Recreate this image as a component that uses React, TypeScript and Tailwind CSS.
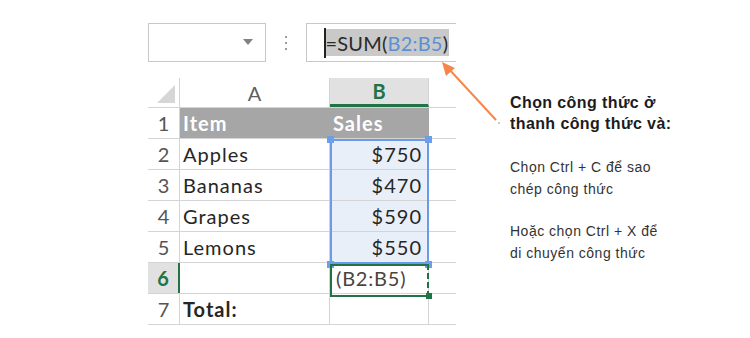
import React from "react";

const rows = [
  { n: "1", a: "Item", b: "Sales", head: true },
  { n: "2", a: "Apples", b: "$750", sel: true },
  { n: "3", a: "Bananas", b: "$470", sel: true },
  { n: "4", a: "Grapes", b: "$590", sel: true },
  { n: "5", a: "Lemons", b: "$550", sel: true },
  { n: "6", a: "", b: "(B2:B5)", active: true },
  { n: "7", a: "Total:", b: "", bold: true },
];

const cellFont = { fontFamily: "Lato, 'Open Sans', sans-serif" };

function FormulaBar() {
  return (
    <div className="flex h-[39px] pl-[148px]">
      <div className="relative h-full w-[118px] border border-[#c8c8c8] bg-white">
        <div className="absolute right-[12px] top-[15px] h-0 w-0 border-x-[5px] border-t-[6px] border-x-transparent border-t-[#808080]" />
      </div>
      <div className="flex w-[40px] flex-col items-center justify-center gap-[4px]">
        <span className="h-[2px] w-[2px] bg-[#9a9a9a]" />
        <span className="h-[2px] w-[2px] bg-[#9a9a9a]" />
        <span className="h-[2px] w-[2px] bg-[#9a9a9a]" />
      </div>
      <div className="flex h-full w-[150px] items-center border-y border-l border-[#c8c8c8] pl-[17px]">
        <div className="h-[30px] w-[1.5px] bg-[#222]" />
        <div
          className="flex h-[27px] items-center bg-[#c9c9c9] pr-[1px] text-[20px] tracking-[0.2px] text-[#2a2a2a]"
          style={cellFont}
        >
          =SUM(<span className="text-[#5a8fd4]">B2:B5</span>)
        </div>
      </div>
    </div>
  );
}

function Grid() {
  return (
    <div className="relative w-[308px]" style={cellFont}>
      {/* header row */}
      <div className="flex h-[30px] border-b border-[#d4d4d4]">
        <div className="relative w-[32px] border-r border-[#d4d4d4]">
          <svg className="absolute left-[9px] top-[7px]" width="18" height="18" viewBox="0 0 18 18">
            <polygon points="18,0 18,18 0,18" fill="#d6d6d6" />
          </svg>
        </div>
        <div className="flex w-[150px] items-center justify-center border-r border-[#d4d4d4] text-[20px] text-[#606060]">
          A
        </div>
        <div className="flex w-[99px] items-center justify-center border-b-[3px] border-r border-b-[#217346] border-r-[#d4d4d4] bg-[#e1e1e1] text-[20px] font-bold text-[#217346]">
          B
        </div>
        <div className="w-[27px]" />
      </div>
      {rows.map((r) => (
        <div key={r.n} className="flex h-[31px] border-b border-[#d4d4d4]">
          <div
            className={
              r.active
                ? "flex w-[32px] items-center justify-center border-r-2 border-[#217346] bg-[#e1e1e1] text-[20px] font-bold text-[#217346]"
                : "flex w-[32px] items-center justify-center border-r border-[#d4d4d4] text-[20px] text-[#555]"
            }
          >
            {r.n}
          </div>
          <div
            className={
              r.head
                ? "flex w-[150px] items-center bg-[#a6a6a6] pl-[3px] text-[20px] font-bold tracking-[1px] text-white"
                : "flex w-[150px] items-center border-r border-[#d4d4d4] pl-[3px] text-[20px] tracking-[1px] text-[#262626] " +
                  (r.bold ? "font-bold" : "")
            }
          >
            {r.a}
          </div>
          <div
            className={
              r.head
                ? "flex w-[99px] items-center bg-[#a6a6a6] pl-[3px] text-[20px] font-bold tracking-[1px] text-white"
                : r.active
                ? "flex w-[99px] items-center border-r border-[#d4d4d4] pl-[6px] text-[20px] tracking-[0.8px] text-[#4a4440]"
                : r.sel
                ? "flex w-[99px] items-center justify-end border-r border-[#d4d4d4] bg-[#e9eff9] pr-[6px] text-[20px] tracking-[1px] text-[#262626]"
                : "flex w-[99px] items-center justify-end border-r border-[#d4d4d4] pr-[6px] text-[20px] tracking-[1px] text-[#262626]"
            }
          >
            {r.b}
          </div>
          <div className="w-[27px]" />
        </div>
      ))}

      {/* selection B2:B5 */}
      <div className="pointer-events-none absolute left-[182px] top-[61px] h-[125px] w-[99px] border-2 border-[#6a9ae8]" />
      <div className="absolute left-[179px] top-[58px] h-[7px] w-[7px] bg-[#6d9eeb]" />
      <div className="absolute left-[277px] top-[58px] h-[7px] w-[7px] bg-[#6d9eeb]" />
      <div className="absolute left-[179px] top-[183px] h-[7px] w-[7px] bg-[#6d9eeb]" />
      <div className="absolute left-[277px] top-[183px] h-[7px] w-[7px] bg-[#6d9eeb]" />

      {/* copy marquee B6 */}
      <div className="pointer-events-none absolute left-[182px] top-[186px] h-[33px] w-[99px] border-y-2 border-l-2 border-[#217346]" />
      <div className="pointer-events-none absolute left-[279px] top-[186px] h-[33px] w-[2px] border-l-2 border-dashed border-[#217346]" />
      <div className="absolute left-[278px] top-[215px] h-[6px] w-[6px] bg-[#217346]" />
    </div>
  );
}

export default function App() {
  return (
    <div
      className="relative h-[338px] w-[750px] overflow-hidden bg-white pt-[23px]"
      style={{ fontFamily: "'Liberation Sans', Arial, sans-serif" }}
    >
      <FormulaBar />
      <div className="mt-[16px] flex pl-[148px]">
        <Grid />
        <div className="ml-[54px] mt-[14px] text-[#1c1c1c]">
          <p className="text-[16px] font-bold leading-[21px] tracking-[0.4px]">
            Chọn công thức ở
            <br />
            thanh công thức và:
          </p>
          <p className="mt-[22px] text-[14px] leading-[22px] tracking-[0.5px] text-[#333]">
            Chọn Ctrl + C để sao
            <br />
            chép công thức
          </p>
          <p className="mt-[20px] text-[14px] leading-[22px] tracking-[0.5px] text-[#333]">
            Hoặc chọn Ctrl + X để
            <br />
            di chuyển công thức
          </p>
        </div>
      </div>

      <svg className="pointer-events-none absolute left-0 top-0" width="750" height="338">
        <line x1="496" y1="120" x2="448" y2="68" stroke="#f5874a" strokeWidth="2" />
        <polygon points="442,62 455,68 446,76" fill="#f5874a" />
        <circle cx="499" cy="123" r="1" fill="#bbb" />
      </svg>
    </div>
  );
}
